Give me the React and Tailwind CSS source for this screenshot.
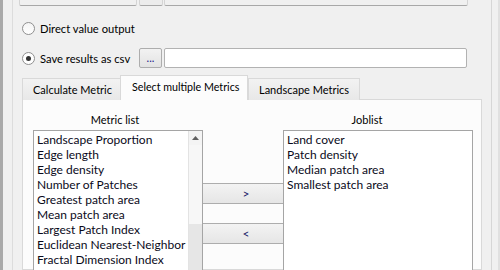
export default function App() {
  const metrics = [
    "Landscape Proportion",
    "Edge length",
    "Edge density",
    "Number of Patches",
    "Greatest patch area",
    "Mean patch area",
    "Largest Patch Index",
    "Euclidean Nearest-Neighbor",
    "Fractal Dimension Index",
  ];
  const jobs = ["Land cover", "Patch density", "Median patch area", "Smallest patch area"];
  return (
    <div className="w-[500px] h-[270px] overflow-hidden bg-[#f0f0f0] flex font-['Lato',sans-serif] text-[11px] leading-[15px] text-black whitespace-nowrap">
      <div className="w-[3px] shrink-0 bg-[#a9a9a9]" />
      <div className="w-[9px] shrink-0" />
      <div className="w-px shrink-0 bg-[#dcdcdc]" />
      <div className="w-[478px] shrink-0 flex flex-col">
        {/* cut-off fields at top */}
        <div className="h-[6px] shrink-0 flex pl-[6px]">
          <div className="w-[118px] h-full border-x border-b border-x-[#d4d4d4] border-b-[#a8a8a8] rounded-b-[2px] bg-[#f0f0f0]" />
          <div className="w-[24px] ml-[2px] h-full border-x border-b border-x-[#d4d4d4] border-b-[#a8a8a8] rounded-b-[2px] bg-[#ececec]" />
          <div className="w-[304px] ml-px h-full border-x border-b border-x-[#d4d4d4] border-b-[#a8a8a8] rounded-b-[2px] bg-[#f0f0f0]" />
        </div>
        {/* radio 1 */}
        <div className="mt-[12px] h-[20px] shrink-0 flex items-center pl-[9px]">
          <div className="w-[13px] h-[13px] rounded-full border border-[#8f8f8f] bg-gradient-to-b from-[#f4f4f4] to-white" />
          <span className="ml-[5px] text-[11.2px]">Direct value output</span>
        </div>
        {/* radio 2 */}
        <div className="mt-[10px] h-[20px] shrink-0 flex items-center pl-[9px]">
          <div className="w-[13px] h-[13px] rounded-full border border-[#8f8f8f] bg-white flex items-center justify-center">
            <div className="w-[5px] h-[5px] rounded-full bg-[#333]" />
          </div>
          <span className="ml-[5px] w-[99px] text-[11.2px]">Save results as csv</span>
          <div className="w-[23px] h-[20px] border border-[#adadad] rounded-[2px] bg-gradient-to-b from-[#f2f2f2] to-[#e3e3e3] flex items-center justify-center text-[#1a1a8a] leading-none pb-[2px]">...</div>
          <div className="w-[303px] h-[20px] ml-[2px] border border-[#b2b2b2] rounded-[2px] bg-white" />
        </div>
        {/* tabs */}
        <div className="mt-[7px] h-[25px] shrink-0 flex items-end pl-[9px] relative z-10">
          <div className="w-[99px] h-[22px] border border-b-0 border-[#d9d9d9] bg-gradient-to-b from-[#f2f2f2] to-[#e8e8e8] flex items-center pl-[10px]">Calculate Metric</div>
          <div className="w-[128px] h-[25px] border border-b-0 border-[#d9d9d9] bg-[#fcfcfc] flex items-center pl-[11px] pb-[3px] -ml-px text-[10.7px]">Select multiple Metrics</div>
          <div className="w-[112px] h-[22px] border border-b-0 border-[#d9d9d9] bg-gradient-to-b from-[#f2f2f2] to-[#e8e8e8] flex items-center pl-[10px]">Landscape Metrics</div>
        </div>
        {/* pane */}
        <div className="-mt-px ml-[9px] w-[460px] flex-1 min-h-0 border border-[#d9d9d9] bg-[#fcfcfc] flex flex-col pl-[10px]">
          <div className="pt-[12px] shrink-0 flex leading-[16px]">
            <div className="w-[170px] text-center pr-[6px]">Metric list</div>
            <div className="w-[80px]" />
            <div className="w-[190px] text-center pr-[22px]">Joblist</div>
          </div>
          <div className="mt-[2px] shrink-0 flex items-start text-[12px]">
            <div className="w-[170px] h-[160px] border border-[#a5a5a5] bg-white flex">
              <div className="flex-1 pl-[3px] pt-px overflow-hidden text-[#0a0a1a]">
                {metrics.map((m) => (
                  <div key={m}>{m}</div>
                ))}
              </div>
              <div className="w-[14px] h-full border-l border-[#e3e3e3] flex flex-col">
                <div className="h-[14px] bg-[#f4f4f4] flex items-center justify-center">
                  <svg width="7" height="4" viewBox="0 0 7 4"><path d="M0 4 L3.5 0 L7 4 Z" fill="#606060" /></svg>
                </div>
                <div className="h-[79px] bg-[#f7f7f7]" />
                <div className="flex-1 bg-[#e6e6e6]" />
              </div>
            </div>
            <div className="w-[80px] pt-[53px] flex flex-col text-[12px]">
              <div className="h-[21px] border-y border-[#adadad] bg-gradient-to-b from-[#f3f3f3] to-[#e6e6e6] flex items-center justify-center pl-[6px] text-[#1a1a6a]">&gt;</div>
              <div className="h-[21px] mt-[19px] border-y border-[#adadad] bg-gradient-to-b from-[#f3f3f3] to-[#e6e6e6] flex items-center justify-center pl-[6px] text-[#1a1a6a]">&lt;</div>
            </div>
            <div className="w-[190px] h-[160px] border border-[#a5a5a5] bg-white pl-[3px] pt-px text-[#0a0a1a]">
              {jobs.map((j) => (
                <div key={j}>{j}</div>
              ))}
            </div>
          </div>
        </div>
      </div>
      <div className="w-px shrink-0 bg-[#d6d6d6]" />
      <div className="w-[6px] shrink-0 bg-[#f0f0f0]" />
      <div className="flex-1 bg-[#e0e0e0]" />
    </div>
  );
}
